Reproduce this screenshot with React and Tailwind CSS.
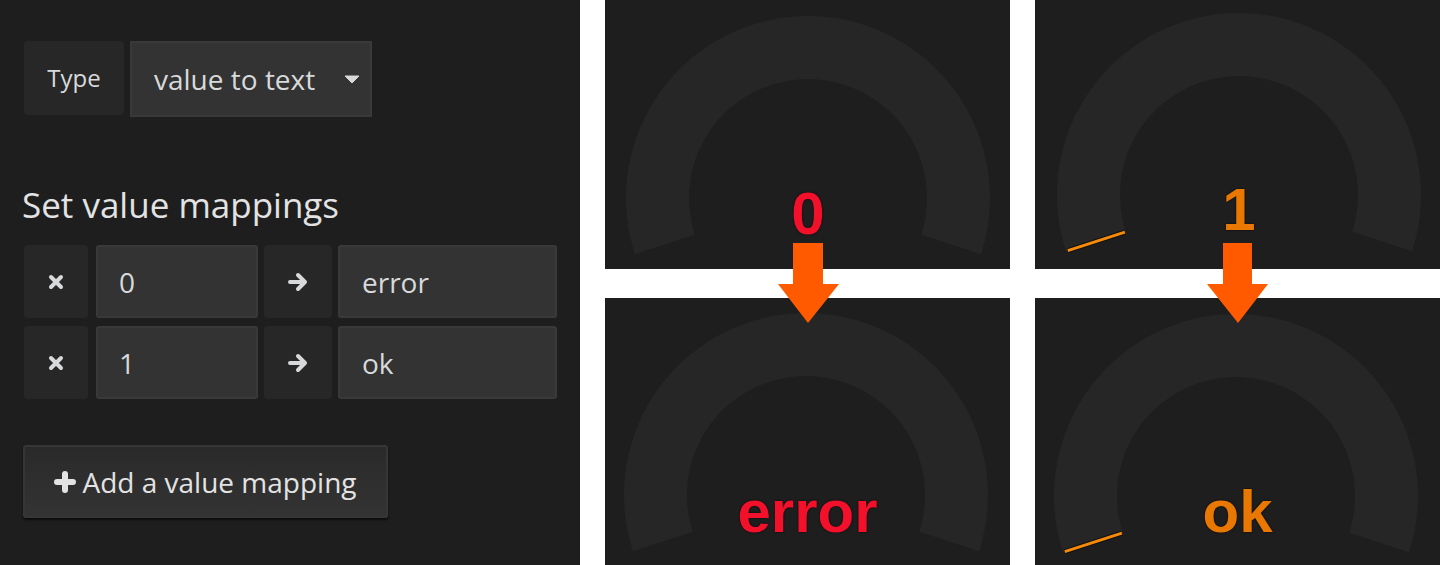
import React from 'react';

const sans = "font-['Open_Sans',_'Liberation_Sans',_sans-serif]";

function arcPath(cx, cy, r1, r2) {
  const a = (18 * Math.PI) / 180;
  const c = Math.cos(a);
  const s = Math.sin(a);
  const pt = (r, dir) => `${(cx + dir * r * c).toFixed(1)} ${(cy + r * s).toFixed(1)}`;
  return `M ${pt(r2, -1)} A ${r2} ${r2} 0 1 1 ${pt(r2, 1)} L ${pt(r1, 1)} A ${r1} ${r1} 0 1 0 ${pt(r1, -1)} Z`;
}

function Gauge({ cx, cy, text, color, threshold, textTop }) {
  const a = (18 * Math.PI) / 180;
  const c = Math.cos(a);
  const s = Math.sin(a);
  return (
    <div className="relative bg-[#1f1e1f] overflow-hidden">
      <svg width="405" height="270" className="block">
        <path d={arcPath(cx, cy, 119, 182)} fill="#262626" />
        {threshold && (
          <g strokeLinecap="butt">
            <line x1={cx - 180 * c} y1={cy + 180 * s} x2={cx - 120 * c} y2={cy + 120 * s} stroke="#111" strokeWidth="5" />
            <line x1={cx - 180 * c} y1={cy + 180 * s} x2={cx - 120 * c} y2={cy + 120 * s} stroke="#f58a0a" strokeWidth="3" />
          </g>
        )}
      </svg>
      <div
        className="absolute inset-x-0 text-center font-['Liberation_Sans',_Arial,_sans-serif] font-bold text-[60px] leading-none [text-shadow:0_0_2px_rgba(0,0,0,0.9)]"
        style={{ top: textTop, color, paddingLeft: (cx - 202.5) * 2 }}
      >
        {text}
      </div>
    </div>
  );
}

function RemoveIcon() {
  return (
    <svg width="16" height="16" viewBox="0 0 16 16">
      <path d="M3 3 L13 13 M13 3 L3 13" stroke="#d8d9da" strokeWidth="4" strokeLinecap="round" />
    </svg>
  );
}

function ArrowIcon() {
  return (
    <svg width="22" height="22" viewBox="0 0 22 22">
      <path d="M3 11 H18 M11 4 L18 11 L11 18" stroke="#d8d9da" strokeWidth="4" fill="none" strokeLinecap="round" strokeLinejoin="round" />
    </svg>
  );
}

function MappingRow({ from, to, className }) {
  return (
    <div className={`flex h-[73px] ${className}`}>
      <div className="w-[64px] flex items-center justify-center bg-[#272727] rounded-sm">
        <RemoveIcon />
      </div>
      <div className="ml-[8px] w-[162px] flex items-center pl-[21px] bg-[#333333] border-2 border-[#393939] rounded-[3px] text-[28px] text-[#d8d9da]">
        {from}
      </div>
      <div className="ml-[6px] w-[68px] flex items-center justify-center bg-[#272727] rounded-sm">
        <ArrowIcon />
      </div>
      <div className="ml-[6px] w-[219px] flex items-center pl-[22px] bg-[#333333] border-2 border-[#393939] rounded-[3px] text-[28px] text-[#d8d9da]">
        {to}
      </div>
    </div>
  );
}

function MappingEditor() {
  return (
    <div className={`w-[580px] shrink-0 bg-[#1f1e1f] pl-[24px] pt-[41px] ${sans}`}>
      <div className="flex">
        <div className="w-[100px] h-[74px] flex items-center justify-center bg-[#272727] rounded-sm text-[24px] text-[#d8d9da]">
          Type
        </div>
        <div className="ml-[6px] w-[242px] h-[76px] flex items-center justify-between pl-[22px] pr-[10px] bg-[#333333] border-2 border-[#393939] text-[28px] text-[#d8d9da]">
          <span>value to text</span>
          <svg width="16" height="9" viewBox="0 0 16 9">
            <path d="M1 1 H15 L8 8 Z" fill="#d8d9da" strokeLinejoin="round" stroke="#d8d9da" strokeWidth="1" />
          </svg>
        </div>
      </div>

      <h2 className="mt-[70px] -ml-[2px] text-[35px] leading-none text-[#e3e3e3]">Set value mappings</h2>

      <MappingRow from="0" to="error" className="mt-[23px]" />
      <MappingRow from="1" to="ok" className="mt-[8px]" />

      <button className="mt-[46px] -ml-[1px] w-[365px] h-[73px] flex items-center justify-center gap-[6px] bg-gradient-to-b from-[#2a2a2a] to-[#333333] border-2 border-[#363636] rounded-[3px] shadow-[0_2px_2px_rgba(0,0,0,0.6)] text-[28px] text-[#e3e3e3]">
        <svg width="22" height="22" viewBox="0 0 22 22">
          <path d="M11 3 V19 M3 11 H19" stroke="#e3e3e3" strokeWidth="6" strokeLinecap="round" />
        </svg>
        <span>Add a value mapping</span>
      </button>
    </div>
  );
}

export default function App() {
  return (
    <div className="flex h-[565px] w-[1440px] bg-white overflow-hidden">
      <MappingEditor />
      <div className="relative grid grid-cols-[405px_405px] grid-rows-[269px_267px] gap-x-[25px] gap-y-[29px] pl-[25px]">
        <Gauge cx={203} cy={198} text="0" color="#f2102b" textTop={184} />
        <Gauge cx={204} cy={195} text="1" color="#e97803" textTop={180} threshold />
        <Gauge cx={201} cy={197} text="error" color="#f2102b" textTop={184} />
        <Gauge cx={201} cy={198} text="ok" color="#e97803" textTop={184} threshold />

        {/* arrows pointing from raw value to mapped text */}
        <svg className="absolute left-0 top-0 pointer-events-none" width="860" height="565">
          <path d="M213 243 H243 V284 H259 L228 323 L198 284 H213 Z" fill="#ff5a00" />
          <path d="M643 243 H672 V284 H688 L658 323 L627 284 H643 Z" fill="#ff5a00" />
        </svg>
      </div>
    </div>
  );
}
